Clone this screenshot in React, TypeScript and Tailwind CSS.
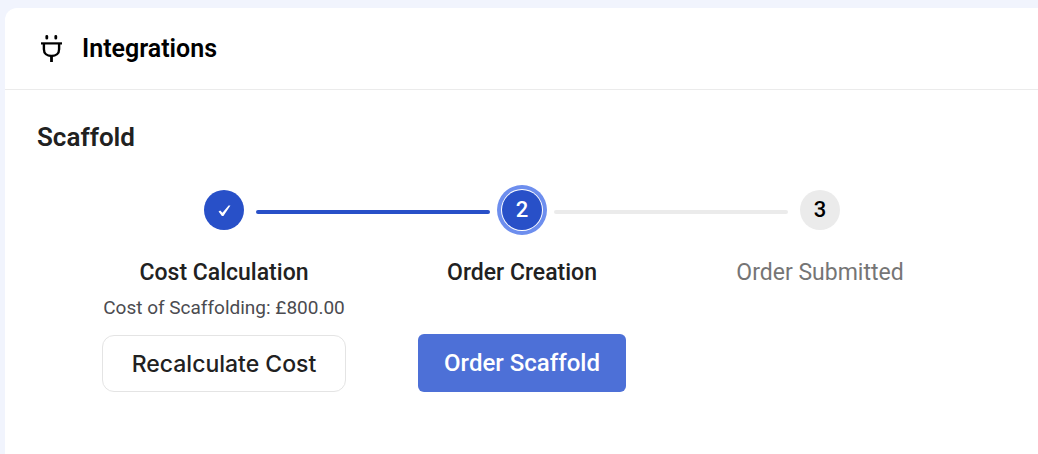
import type { ReactNode } from "react";

type StepState = "done" | "active" | "upcoming";

const circleStyles: Record<StepState, string> = {
  done: "bg-[#2850c8] text-white",
  active: "bg-[#2850c8] text-white ring-4 ring-[#6d8eee] ring-offset-1 ring-offset-white",
  upcoming: "bg-[#ebebeb] text-black",
};

const titleStyles: Record<StepState, string> = {
  done: "font-medium text-[#212121]",
  active: "font-medium text-[#212121]",
  upcoming: "font-normal text-[#757575]",
};

const lineStyles = {
  none: "",
  filled: "bg-[#2850c8]",
  empty: "bg-[#ebebeb]",
};

type Line = keyof typeof lineStyles;

interface StepProps {
  state: StepState;
  marker: ReactNode;
  title: string;
  before: Line;
  after: Line;
  note?: string;
  children?: ReactNode;
}

function Step({ state, marker, title, before, after, note, children }: StepProps) {
  return (
    <li className="flex min-w-0 flex-col items-center" aria-current={state === "active" ? "step" : undefined}>
      <div className="flex w-full items-center gap-3">
        <span className={`mt-1 h-1 flex-1 rounded-r-full ${lineStyles[before]}`} />
        <span
          className={`flex size-10 shrink-0 items-center justify-center rounded-full text-[22px] leading-none font-medium ${circleStyles[state]}`}
        >
          {marker}
        </span>
        <span className={`mt-1 h-1 flex-1 rounded-l-full ${lineStyles[after]}`} />
      </div>
      <h3 className={`mt-[25px] text-[23px] leading-9 whitespace-nowrap ${titleStyles[state]}`}>{title}</h3>
      <p className="h-[34px] text-[19px] leading-[34px] whitespace-nowrap text-[#4b4b50]">{note}</p>
      {children}
    </li>
  );
}

function PlugIcon() {
  return (
    <svg viewBox="0 1 24 30" className="h-[30px] w-6" fill="none" stroke="black" strokeWidth="2" aria-hidden="true">
      <path d="M7.8 3.3v1.9M16.8 3.3v1.9" strokeWidth="2.8" strokeLinecap="round" />
      <path d="M2 10.4h21" strokeWidth="2.2" />
      <path d="M4.9 10.5v5.7c0 4.2 3 6.8 7.6 6.8s7.6-2.6 7.6-6.8v-5.7" strokeWidth="2.4" />
      <path d="M12.5 23v6" strokeWidth="2.8" />
    </svg>
  );
}

function CheckIcon() {
  return (
    <svg viewBox="0 0 14 14" className="size-[13px]" aria-label="Completed">
      <path d="M.6 8.2 2.4 7 4.8 9.4 11.4 1.6 13.4 1.6 5.8 12.8 4.2 12.8Z" fill="white" />
    </svg>
  );
}

export default function App() {
  return (
    <div className="min-h-screen bg-[#f1f4fd] pt-2 pl-[5px] font-['Roboto',sans-serif]">
      <main className="min-h-[calc(100vh-8px)] rounded-tl-xl bg-white">
        <header className="flex items-center gap-[19px] border-b border-[#ebebeb] px-[34px] py-5 text-black">
          <PlugIcon />
          <h1 className="text-[25px] leading-[41px] font-semibold">Integrations</h1>
        </header>
        <section className="pt-[27px]">
          <h2 className="px-8 text-[26px] leading-10 font-semibold text-[#212121]">Scaffold</h2>
          <ol className="mt-[33px] grid grid-cols-3 pr-[69px] pl-[70px]">
            <Step
              state="done"
              marker={<CheckIcon />}
              title="Cost Calculation"
              before="none"
              after="filled"
              note="Cost of Scaffolding: £800.00"
            >
              <button
                type="button"
                className="mt-2.5 rounded-xl border border-[#e4e4e4] bg-white px-[29px] pt-[11px] pb-[9px] font-['Inter',sans-serif] text-[23px] leading-[35px] font-medium whitespace-nowrap text-[#212121]"
              >
                Recalculate Cost
              </button>
            </Step>
            <Step state="active" marker="2" title="Order Creation" before="filled" after="empty">
              <button
                type="button"
                className="mt-[9px] rounded-md bg-[#4d70d7] px-[26px] py-[11px] text-[24px] leading-9 font-medium whitespace-nowrap text-white"
              >
                Order Scaffold
              </button>
            </Step>
            <Step state="upcoming" marker="3" title="Order Submitted" before="empty" after="none" />
          </ol>
        </section>
      </main>
    </div>
  );
}
